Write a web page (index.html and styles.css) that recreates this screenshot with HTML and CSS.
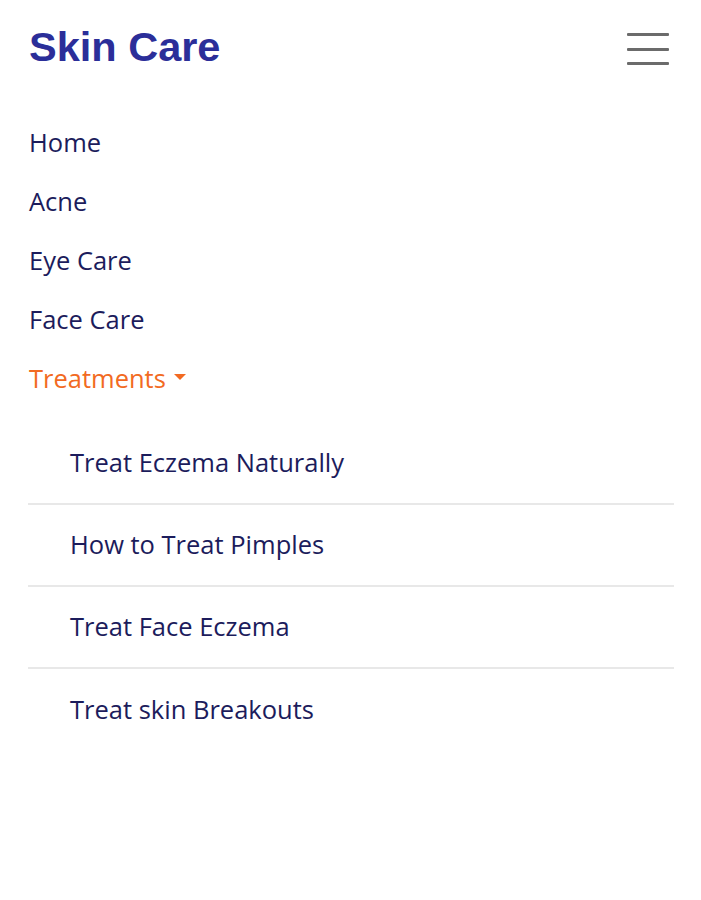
FILE: index.html
```html
<!DOCTYPE html>
<html lang="en">
<head>
<meta charset="utf-8">
<title>Skin Care</title>
<link rel="stylesheet" href="styles.css">
</head>
<body>
<div class="page">
  <header class="header">
    <div class="brand">Skin Care</div>
    <button class="burger" aria-label="Menu">
      <span class="bar"></span>
      <span class="bar"></span>
      <span class="bar"></span>
    </button>
  </header>
  <nav class="nav">
    <a class="nav-item" href="#">Home</a>
    <a class="nav-item" href="#">Acne</a>
    <a class="nav-item" href="#">Eye Care</a>
    <a class="nav-item" href="#">Face Care</a>
    <a class="nav-item active" href="#">Treatments<span class="caret"></span></a>
    <div class="submenu">
      <a class="sub-item" href="#">Treat Eczema Naturally</a>
      <a class="sub-item" href="#">How to Treat Pimples</a>
      <a class="sub-item" href="#">Treat Face Eczema</a>
      <a class="sub-item last" href="#">Treat skin Breakouts</a>
    </div>
  </nav>
</div>
</body>
</html>
```
FILE: styles.css
```css
* { box-sizing: border-box; }
html, body { margin: 0; padding: 0; background: #ffffff; }
.page {
  padding: 0 27px 0 28px;
  font-family: "Open Sans", "Liberation Sans", sans-serif;
}
.header {
  height: 98px;
  display: flex;
  align-items: center;
  justify-content: space-between;
}
.brand {
  font-family: "Liberation Sans", Arial, sans-serif;
  font-weight: bold;
  font-size: 41.5px;
  color: #2b2e99;
  margin-left: 1px;
  margin-top: -4px;
}
.burger {
  background: none;
  border: 0;
  padding: 0;
  width: 42px;
  height: 32px;
  margin-right: 5px;
  display: flex;
  flex-direction: column;
  justify-content: space-between;
  cursor: pointer;
}
.bar {
  display: block;
  height: 3px;
  width: 42px;
  background: #6b6b6b;
  border-radius: 1px;
}
.nav {
  display: flex;
  flex-direction: column;
  padding-top: 15px;
}
.nav-item {
  display: flex;
  align-items: center;
  height: 59px;
  padding-bottom: 2px;
  font-size: 25.5px;
  font-weight: 500;
  color: #1c1c5c;
  text-decoration: none;
  margin-left: 1px;
}
.nav-item.active { color: #f26a22; }
.caret {
  width: 0;
  height: 0;
  border-left: 6px solid transparent;
  border-right: 6px solid transparent;
  border-top: 6px solid #f26a22;
  margin-left: 8px;
  margin-top: -2px;
}
.submenu {
  display: flex;
  flex-direction: column;
  margin-top: 15px;
}
.sub-item {
  display: flex;
  align-items: center;
  height: 82px;
  padding-left: 42px;
  padding-bottom: 3px;
  font-size: 25.5px;
  font-weight: 500;
  color: #1c1c5c;
  text-decoration: none;
  border-bottom: 2px solid #e8e8e8;
}
.sub-item.last { border-bottom: 0; }
```
